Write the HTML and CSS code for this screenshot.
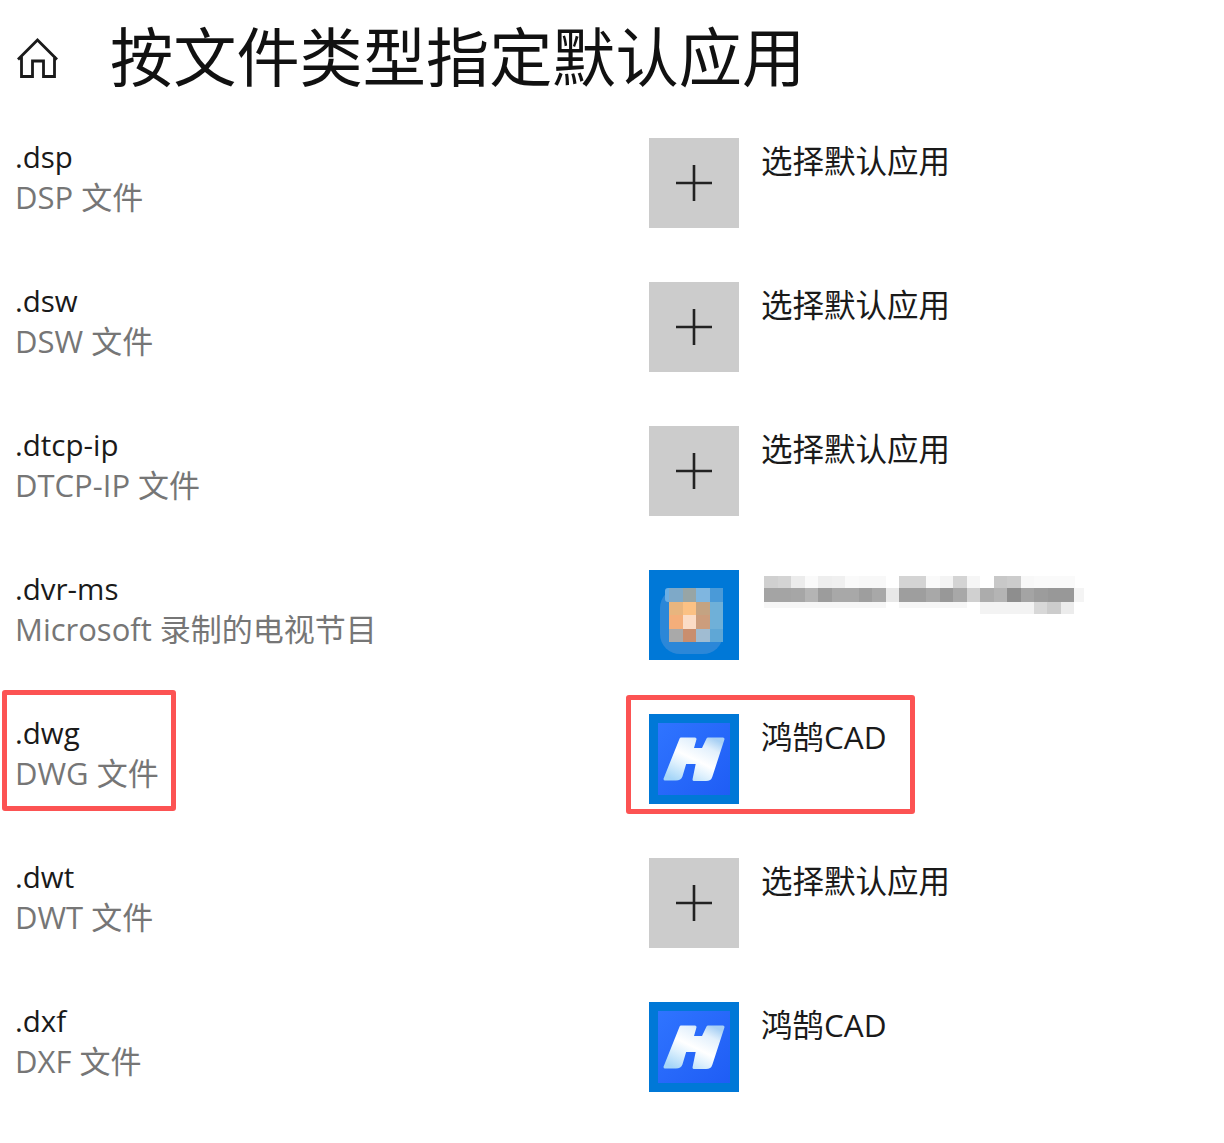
FILE: index.html
```html
<!DOCTYPE html>
<html lang="zh-CN">
<head>
  <meta charset="UTF-8">
  <title>按文件类型指定默认应用</title>
  <link rel="stylesheet" href="styles.css">
</head>
<body>
  <div class="page">
    <header class="page-head">
      <svg class="home-icon" width="44" height="42" viewBox="0 0 44 42">
        <path d="M2 22.5 L21.5 3 L41 22.5 M5.5 19 V39.5 H16.5 V24 H27.5 V39.5 H38.5 V19" fill="none" stroke="#1a1a1a" stroke-width="2.8"/>
      </svg>
      <h1>按文件类型指定默认应用</h1>
    </header>

    <div class="list">
      <div class="row">
        <div class="type"><div class="ext">.dsp</div><div class="desc">DSP 文件</div></div>
        <div class="app">
          <div class="tile tile-add"><svg width="36" height="36" viewBox="0 0 36 36"><path d="M18 0 V36 M0 18 H36" stroke="#222" stroke-width="2.6"/></svg></div>
          <span class="app-name">选择默认应用</span>
        </div>
      </div>

      <div class="row">
        <div class="type"><div class="ext">.dsw</div><div class="desc">DSW 文件</div></div>
        <div class="app">
          <div class="tile tile-add"><svg width="36" height="36" viewBox="0 0 36 36"><path d="M18 0 V36 M0 18 H36" stroke="#222" stroke-width="2.6"/></svg></div>
          <span class="app-name">选择默认应用</span>
        </div>
      </div>

      <div class="row">
        <div class="type"><div class="ext">.dtcp-ip</div><div class="desc">DTCP-IP 文件</div></div>
        <div class="app">
          <div class="tile tile-add"><svg width="36" height="36" viewBox="0 0 36 36"><path d="M18 0 V36 M0 18 H36" stroke="#222" stroke-width="2.6"/></svg></div>
          <span class="app-name">选择默认应用</span>
        </div>
      </div>

      <div class="row">
        <div class="type"><div class="ext">.dvr-ms</div><div class="desc">Microsoft 录制的电视节目</div></div>
        <div class="app">
          <!-- 打码的应用图标 -->
          <div class="tile tile-blue">
            <svg width="90" height="90" viewBox="0 0 90 90">
              <rect x="11" y="18" width="63" height="66" rx="20" fill="#2b87d8"/>
              <rect x="16" y="18" width="10" height="14" rx="3" fill="#6aaee4"/>
              <g shape-rendering="crispEdges">
                <rect x="20" y="18" width="14" height="14" fill="#7ea9c8"/><rect x="34" y="18" width="13" height="14" fill="#97a5a6"/><rect x="47" y="18" width="14" height="14" fill="#7fb6e0"/><rect x="61" y="18" width="13" height="14" fill="#4a9ad8"/>
                <rect x="20" y="32" width="14" height="13" fill="#e8b57e"/><rect x="34" y="32" width="13" height="13" fill="#fbc184"/><rect x="47" y="32" width="14" height="13" fill="#c4a382"/><rect x="61" y="32" width="13" height="13" fill="#6fb0d8"/>
                <rect x="20" y="45" width="14" height="14" fill="#f4ae7a"/><rect x="34" y="45" width="13" height="14" fill="#fbdcc6"/><rect x="47" y="45" width="14" height="14" fill="#cc9d7d"/><rect x="61" y="45" width="13" height="14" fill="#6fb0d8"/>
                <rect x="20" y="59" width="14" height="13" fill="#a9a9a9"/><rect x="34" y="59" width="13" height="13" fill="#c98e6e"/><rect x="47" y="59" width="14" height="13" fill="#a0bcd2"/><rect x="61" y="59" width="13" height="13" fill="#5fa7d6"/>
              </g>
            </svg>
          </div>
          <!-- 打码的应用名称 -->
          <svg class="app-blur" width="326" height="42" viewBox="0 0 326 42" shape-rendering="crispEdges">
            <g>
              <rect x="3" y="0" width="14" height="12" fill="#d0d0d0"/><rect x="17" y="0" width="13" height="12" fill="#d4d4d4"/><rect x="30" y="0" width="14" height="12" fill="#ececec"/><rect x="44" y="0" width="13" height="12" fill="#fafafa"/><rect x="57" y="0" width="14" height="12" fill="#eeeeee"/><rect x="71" y="0" width="13" height="12" fill="#f0f0f0"/><rect x="84" y="0" width="14" height="12" fill="#fafafa"/><rect x="98" y="0" width="13" height="12" fill="#f8f8f8"/><rect x="111" y="0" width="14" height="12" fill="#f8f8f8"/><rect x="138" y="0" width="14" height="12" fill="#d4d4d4"/><rect x="152" y="0" width="13" height="12" fill="#d4d4d4"/><rect x="165" y="0" width="14" height="12" fill="#fafafa"/><rect x="179" y="0" width="13" height="12" fill="#f4f4f4"/><rect x="192" y="0" width="14" height="12" fill="#d4d4d4"/><rect x="206" y="0" width="13" height="12" fill="#f6f6f6"/><rect x="233" y="0" width="13" height="12" fill="#c8c8c8"/><rect x="246" y="0" width="14" height="12" fill="#cccccc"/><rect x="260" y="0" width="13" height="12" fill="#f8f8f8"/><rect x="273" y="0" width="14" height="12" fill="#fafafa"/><rect x="287" y="0" width="13" height="12" fill="#fafafa"/><rect x="300" y="0" width="14" height="12" fill="#fafafa"/>
            </g>
            <g>
              <rect x="3" y="12" width="14" height="14" fill="#a4a4a4"/><rect x="17" y="12" width="13" height="14" fill="#a4a4a4"/><rect x="30" y="12" width="14" height="14" fill="#a6a6a6"/><rect x="44" y="12" width="13" height="14" fill="#b4b4b4"/><rect x="57" y="12" width="14" height="14" fill="#9c9c9c"/><rect x="71" y="12" width="13" height="14" fill="#a8a8a8"/><rect x="84" y="12" width="14" height="14" fill="#a8a8a8"/><rect x="98" y="12" width="13" height="14" fill="#9e9e9e"/><rect x="111" y="12" width="14" height="14" fill="#a8a8a8"/><rect x="125" y="12" width="13" height="14" fill="#e8e8e8"/><rect x="138" y="12" width="14" height="14" fill="#9e9e9e"/><rect x="152" y="12" width="13" height="14" fill="#9e9e9e"/><rect x="165" y="12" width="14" height="14" fill="#a8a8a8"/><rect x="179" y="12" width="13" height="14" fill="#989898"/><rect x="192" y="12" width="14" height="14" fill="#a8a8a8"/><rect x="206" y="12" width="13" height="14" fill="#d0d0d0"/><rect x="219" y="12" width="14" height="14" fill="#acacac"/><rect x="233" y="12" width="13" height="14" fill="#b4b4b4"/><rect x="246" y="12" width="14" height="14" fill="#8e8e8e"/><rect x="260" y="12" width="13" height="14" fill="#a4a4a4"/><rect x="273" y="12" width="14" height="14" fill="#9c9c9c"/><rect x="287" y="12" width="13" height="14" fill="#989898"/><rect x="300" y="12" width="13" height="14" fill="#989898"/><rect x="313" y="12" width="10" height="14" fill="#f4f4f4"/>
            </g>
            <g>
              <rect x="3" y="26" width="122" height="6" fill="#f6f6f6"/><rect x="138" y="26" width="68" height="6" fill="#f6f6f6"/><rect x="219" y="26" width="54" height="12" fill="#f3f3f3"/><rect x="273" y="26" width="13" height="12" fill="#d8d8d8"/><rect x="286" y="26" width="14" height="12" fill="#cccccc"/><rect x="300" y="26" width="13" height="12" fill="#ececec"/>
            </g>
          </svg>
        </div>
      </div>

      <div class="row">
        <div class="type"><div class="ext">.dwg</div><div class="desc">DWG 文件</div></div>
        <div class="app">
          <div class="tile tile-blue">
            <svg width="90" height="90" viewBox="0 0 90 90">
              <defs>
                <linearGradient id="logoBg" x1="0" y1="0" x2="1" y2="1"><stop offset="0" stop-color="#2f74ff"/><stop offset="1" stop-color="#1f5df5"/></linearGradient>
                <linearGradient id="logoH" x1="0.15" y1="1" x2="0.85" y2="0"><stop offset="0" stop-color="#a6d6f8"/><stop offset="0.3" stop-color="#dff1fd"/><stop offset="0.5" stop-color="#ffffff"/><stop offset="0.8" stop-color="#e2f0fc"/><stop offset="1" stop-color="#a8d0f4"/></linearGradient>
              </defs>
              <rect x="9" y="9" width="72" height="72" fill="url(#logoBg)"/>
              <path class="logo-h" d="M32 25 H46 L43 35.5 H54 L59 25 H74 L62 62 Q61 65.5 57 65.5 H45 L48.5 48.5 H36 L32 62 Q31 65 27 65 H16 Z"/>
            </svg>
          </div>
          <span class="app-name">鸿鹄CAD</span>
        </div>
      </div>

      <div class="row">
        <div class="type"><div class="ext">.dwt</div><div class="desc">DWT 文件</div></div>
        <div class="app">
          <div class="tile tile-add"><svg width="36" height="36" viewBox="0 0 36 36"><path d="M18 0 V36 M0 18 H36" stroke="#222" stroke-width="2.6"/></svg></div>
          <span class="app-name">选择默认应用</span>
        </div>
      </div>

      <div class="row">
        <div class="type"><div class="ext">.dxf</div><div class="desc">DXF 文件</div></div>
        <div class="app">
          <div class="tile tile-blue">
            <svg width="90" height="90" viewBox="0 0 90 90">
              <rect x="9" y="9" width="72" height="72" fill="url(#logoBg)"/>
              <path class="logo-h" d="M32 25 H46 L43 35.5 H54 L59 25 H74 L62 62 Q61 65.5 57 65.5 H45 L48.5 48.5 H36 L32 62 Q31 65 27 65 H16 Z"/>
            </svg>
          </div>
          <span class="app-name">鸿鹄CAD</span>
        </div>
      </div>
    </div>

    <!-- 红色标注框 -->
    <div class="mark mark-type"></div>
    <div class="mark mark-app"></div>
  </div>
</body>
</html>
```

FILE: styles.css
```css
body {
  margin: 0;
  background-color: #fff;
  font-family: "Open Sans", "Noto Sans CJK SC", sans-serif;
  color: #1a1a1a;
}

.page {
  position: relative;
  height: 1143px;
  overflow: hidden;
}

.page-head {
  display: flex;
  align-items: center;
  height: 138px;
  padding: 0 0 24px 16px;
  box-sizing: border-box;
}

.home-icon {
  flex: none;
  margin-top: 2px;
}

h1 {
  margin: 0 0 0 50px;
  font-size: 63.2px;
  font-weight: 400;
  line-height: 90px;
  color: #111;
  white-space: nowrap;
}

.list {
  display: flex;
  flex-direction: column;
  gap: 54px;
}

.row {
  display: flex;
  height: 90px;
}

.type {
  width: 649px;
  margin-top: -2px;
  padding-left: 15px;
  box-sizing: border-box;
  font-size: 31px;
  line-height: 41px;
}

.ext {
  font-size: 29.5px;
}

.desc {
  color: #767676;
}

.app {
  display: flex;
  gap: 22px;
  font-size: 31.5px;
  line-height: 46px;
}

.tile {
  flex: none;
  width: 90px;
  height: 90px;
  display: flex;
  align-items: center;
  justify-content: center;
}

.tile-add {
  background-color: #ccc;
}

.tile-blue {
  background-color: #0078d7;
}

.logo-h {
  fill: url(#logoH);
  stroke: url(#logoH);
  stroke-width: 3;
  stroke-linejoin: round;
  filter: blur(0.5px);
}

.app-blur {
  margin-top: 6px;
}

.mark {
  position: absolute;
  border: 5px solid #fc5353;
  border-radius: 3px;
  box-sizing: border-box;
}

.mark-type {
  left: 2px;
  top: 690px;
  width: 174px;
  height: 121px;
}

.mark-app {
  left: 626px;
  top: 695px;
  width: 289px;
  height: 119px;
}
```
